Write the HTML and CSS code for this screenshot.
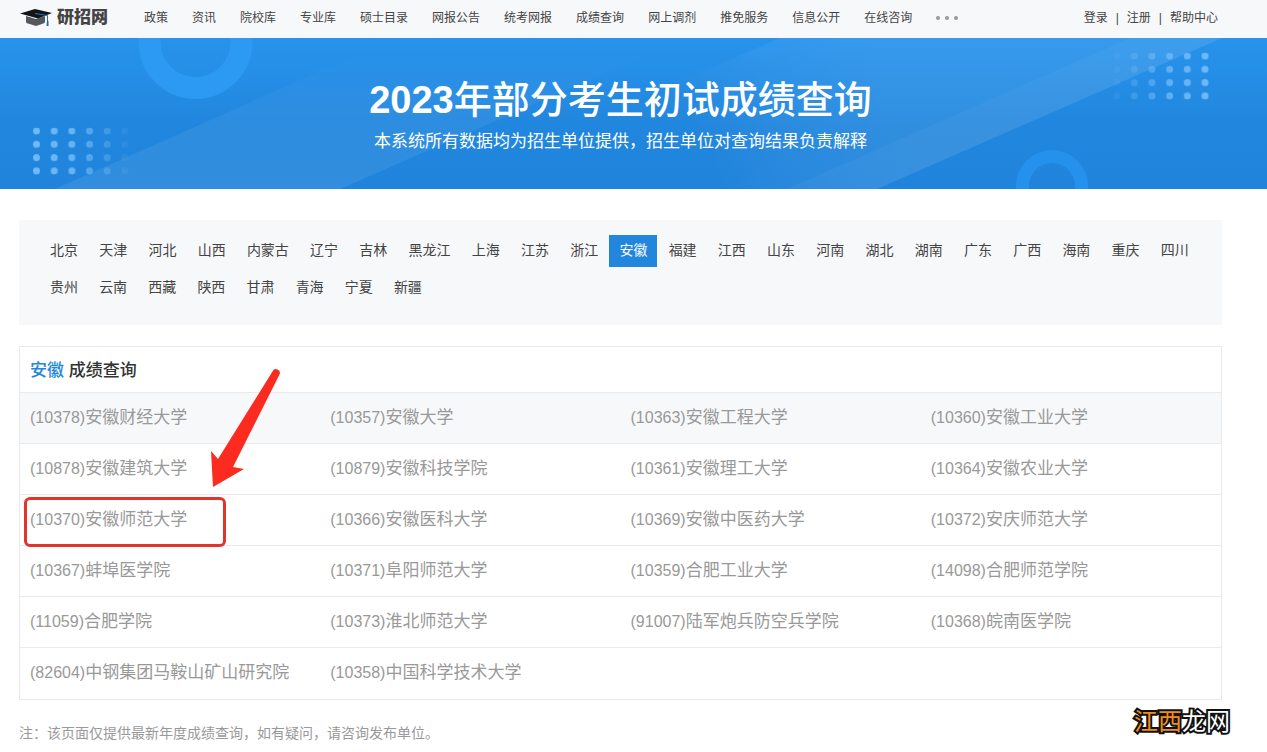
FILE: index.html
```html
<!DOCTYPE html>
<html lang="zh-CN">
<head>
<meta charset="utf-8">
<title>2023年部分考生初试成绩查询</title>
<link rel="stylesheet" href="styles.css">
</head>
<body>
<header class="topbar">
  <a class="logo" href="#">
    <svg class="logo-cap" viewBox="0 0 32 18" aria-hidden="true">
      <path d="M6 7v6q0 1 2 1.600l8 2.400 6-2q3-1 3-2V7l-9 3z" fill="#55585c"/>
      <path d="M0 4.500 15 0l17 4-14 5.500z" fill="#111418"/>
      <path d="M15 4.500 27.500 6.500V16" fill="none" stroke="#2f6fae" stroke-width="1"/>
      <path d="M27 12h1.500v5H26.500z" fill="#26639f"/>
    </svg>
    <span>研招网</span>
  </a>
  <nav class="main-nav">
    <a href="#">政策</a><a href="#">资讯</a><a href="#">院校库</a><a href="#">专业库</a><a href="#">硕士目录</a><a href="#">网报公告</a><a href="#">统考网报</a><a href="#">成绩查询</a><a href="#">网上调剂</a><a href="#">推免服务</a><a href="#">信息公开</a><a href="#">在线咨询</a>
    <button class="more" type="button" aria-label="更多"><i></i><i></i><i></i></button>
  </nav>
  <div class="user-nav">
    <a href="#">登录</a><span>|</span><a href="#">注册</a><span>|</span><a href="#">帮助中心</a>
  </div>
</header>

<section class="banner">
  <svg class="banner-art" viewBox="0 0 1267 151" preserveAspectRatio="xMidYMid slice" aria-hidden="true">
    <defs>
      <linearGradient id="sky" x1="0" y1="0" x2="0" y2="1"><stop offset="0" stop-color="#2893ec"/><stop offset=".6" stop-color="#2186dd"/><stop offset="1" stop-color="#2084dc"/></linearGradient>
      <linearGradient id="beamA" x1="0" y1="1" x2="0" y2="0"><stop offset="0" stop-color="#fff" stop-opacity=".08"/><stop offset=".5" stop-color="#fff" stop-opacity=".05"/><stop offset=".9" stop-color="#fff" stop-opacity="0"/></linearGradient>
      <linearGradient id="beamB" gradientUnits="userSpaceOnUse" x1="690" y1="80" x2="870" y2="10"><stop offset="0" stop-color="#fff" stop-opacity="0"/><stop offset=".4" stop-color="#fff" stop-opacity=".04"/><stop offset="1" stop-color="#fff" stop-opacity=".07"/></linearGradient>
      <pattern id="dots" width="17.700" height="13.300" patternUnits="userSpaceOnUse"><circle cx="3.500" cy="3.500" r="3.500" fill="#78bffa"/></pattern>
      <linearGradient id="fadeR"><stop offset="0" stop-color="#fff" stop-opacity=".9"/><stop offset=".4" stop-color="#fff" stop-opacity=".8"/><stop offset="1" stop-color="#fff" stop-opacity=".08"/></linearGradient>
      <linearGradient id="fadeL"><stop offset="0" stop-color="#fff" stop-opacity=".08"/><stop offset=".6" stop-color="#fff" stop-opacity=".7"/><stop offset="1" stop-color="#fff" stop-opacity=".9"/></linearGradient>
      <mask id="maskR"><rect width="96" height="48" fill="url(#fadeR)"/></mask>
      <mask id="maskL"><rect width="96" height="48" fill="url(#fadeL)"/></mask>
    </defs>
    <rect width="1267" height="151" fill="url(#sky)"/>
    <path d="M55 151 395 0H685L340 151z" fill="url(#beamA)"/>
    <path d="M430 151 780 0H1222L877 151z" fill="url(#beamB)"/>
    <path d="M787 151 1130 0H1222L877 151z" fill="#fff" fill-opacity=".035"/>
    <circle cx="195.500" cy="4" r="46" fill="none" stroke="#2c99f3" stroke-width="22"/>
    <circle cx="1052" cy="148" r="29.500" fill="none" stroke="#2591ec" stroke-width="13"/>
    <g transform="translate(33 89.500)"><rect width="96" height="48" fill="url(#dots)" mask="url(#maskR)"/></g>
    <g transform="translate(1113 14.500)"><rect width="96" height="48" fill="url(#dots)" mask="url(#maskL)"/></g>
  </svg>
  <div class="banner-text">
    <h1><b>2023</b>年部分考生初试成绩查询</h1>
    <p>本系统所有数据均为招生单位提供，招生单位对查询结果负责解释</p>
  </div>
</section>

<main class="content">
  <ul class="regions">
    <li><a href="#">北京</a></li>
    <li><a href="#">天津</a></li>
    <li><a href="#">河北</a></li>
    <li><a href="#">山西</a></li>
    <li><a href="#">内蒙古</a></li>
    <li><a href="#">辽宁</a></li>
    <li><a href="#">吉林</a></li>
    <li><a href="#">黑龙江</a></li>
    <li><a href="#">上海</a></li>
    <li><a href="#">江苏</a></li>
    <li><a href="#">浙江</a></li>
    <li><a class="active" href="#">安徽</a></li>
    <li><a href="#">福建</a></li>
    <li><a href="#">江西</a></li>
    <li><a href="#">山东</a></li>
    <li><a href="#">河南</a></li>
    <li><a href="#">湖北</a></li>
    <li><a href="#">湖南</a></li>
    <li><a href="#">广东</a></li>
    <li><a href="#">广西</a></li>
    <li><a href="#">海南</a></li>
    <li><a href="#">重庆</a></li>
    <li><a href="#">四川</a></li>
    <li><a href="#">贵州</a></li>
    <li><a href="#">云南</a></li>
    <li><a href="#">西藏</a></li>
    <li><a href="#">陕西</a></li>
    <li><a href="#">甘肃</a></li>
    <li><a href="#">青海</a></li>
    <li><a href="#">宁夏</a></li>
    <li><a href="#">新疆</a></li>
  </ul>

  <section class="results">
    <h2><span>安徽</span> 成绩查询</h2>
    <table>
      <tbody>
        <tr class="shaded"><td><a href="#"><span class="code">(10378)</span>安徽财经大学</a></td><td><a href="#"><span class="code">(10357)</span>安徽大学</a></td><td><a href="#"><span class="code">(10363)</span>安徽工程大学</a></td><td><a href="#"><span class="code">(10360)</span>安徽工业大学</a></td></tr>
        <tr><td><a href="#"><span class="code">(10878)</span>安徽建筑大学</a></td><td><a href="#"><span class="code">(10879)</span>安徽科技学院</a></td><td><a href="#"><span class="code">(10361)</span>安徽理工大学</a></td><td><a href="#"><span class="code">(10364)</span>安徽农业大学</a></td></tr>
        <tr>
          <td class="marked"><a href="#"><span class="code">(10370)</span>安徽师范大学</a>
            <svg class="arrow" viewBox="0 0 76 124" aria-hidden="true"><path d="M65.500 6.500A3.500 3.500 0 0 1 72.500 9.500L26 102 37 104 6 122 4 86 11 94z" fill="#fb2b20"/></svg>
          </td><td><a href="#"><span class="code">(10366)</span>安徽医科大学</a></td><td><a href="#"><span class="code">(10369)</span>安徽中医药大学</a></td><td><a href="#"><span class="code">(10372)</span>安庆师范大学</a></td></tr>
        <tr><td><a href="#"><span class="code">(10367)</span>蚌埠医学院</a></td><td><a href="#"><span class="code">(10371)</span>阜阳师范大学</a></td><td><a href="#"><span class="code">(10359)</span>合肥工业大学</a></td><td><a href="#"><span class="code">(14098)</span>合肥师范学院</a></td></tr>
        <tr><td><a href="#"><span class="code">(11059)</span>合肥学院</a></td><td><a href="#"><span class="code">(10373)</span>淮北师范大学</a></td><td><a href="#"><span class="code">(91007)</span>陆军炮兵防空兵学院</a></td><td><a href="#"><span class="code">(10368)</span>皖南医学院</a></td></tr>
        <tr><td><a href="#"><span class="code">(82604)</span>中钢集团马鞍山矿山研究院</a></td><td><a href="#"><span class="code">(10358)</span>中国科学技术大学</a></td><td></td><td></td></tr>
      </tbody>
    </table>
  </section>

  <p class="note">注：该页面仅提供最新年度成绩查询，如有疑问，请咨询发布单位。</p>
</main>

<div class="watermark"><span>江西</span>龙网</div>
</body>
</html>
```
FILE: styles.css
```css
*, *::after {
  box-sizing: border-box;
}

body {
  position: relative;
  margin: 0;
  background: #fff;
  color: #444;
  font-family: "Liberation Sans", "Noto Sans CJK SC", sans-serif;
}

a {
  color: inherit;
  text-decoration: none;
}

h1, h2, p, ul {
  margin: 0;
  padding: 0;
}

.topbar {
  display: flex;
  align-items: center;
  height: 38px;
  padding: 0 49px 3px 20px;
  background: #f7f8fa;
  font-size: 12px;
  line-height: 18px;
  white-space: nowrap;
}

.logo {
  display: flex;
  align-items: center;
  gap: 5px;
  width: 124px;
  color: #444;
  font-size: 17px;
  font-weight: 900;
}

.logo-cap {
  width: 32px;
  height: 18px;
}

.main-nav {
  display: flex;
  align-items: center;
  gap: 24px;
}

.more {
  display: flex;
  gap: 5px;
  padding: 0;
  border: 0;
  background: none;
}

.more i {
  width: 4px;
  height: 4px;
  border-radius: 50%;
  background: #999;
}

.user-nav {
  display: flex;
  gap: 8px;
  margin-left: auto;
}

.banner {
  position: relative;
  padding: 37px 26px 30px 0;
  background: #2186dd;
  color: #fff;
  text-align: center;
}

.banner-art {
  position: absolute;
  inset: 0;
  width: 100%;
  height: 100%;
}

.banner-text {
  position: relative;
}

.banner h1 {
  font-size: 38px;
  font-weight: 500;
  line-height: 50px;
}

.banner p {
  font-size: 17px;
  line-height: 34px;
}

.content {
  padding: 31px 45px 9px 19px;
}

.regions {
  padding: 15px 23px 16px 21px;
  background: #f7f8fa;
  list-style: none;
  font-size: 4px;
  line-height: 0;
  text-align: justify;
}

.regions li {
  display: inline-block;
  margin-bottom: 5px;
  vertical-align: top;
  font-size: 14px;
  line-height: 30px;
}

.regions a {
  display: block;
  padding: 0 10px 2px;
}

.regions .active {
  background: #2186dc;
  color: #fff;
}

.results {
  margin-top: 21px;
  border: 1px solid #e8eaeb;
}

.results h2 {
  padding: 2px 0 0 10px;
  color: #333;
  font-size: 17px;
  font-weight: 500;
  line-height: 43px;
}

.results h2 span {
  color: #2186dc;
}

.results table {
  width: 100%;
  border-collapse: collapse;
  table-layout: fixed;
}

.results tr {
  height: 51px;
  border-top: 1px solid #e8eaeb;
}

.results .shaded {
  background: #f6f8fa;
}

.results td {
  padding: 0 0 0 10px;
  color: #999;
  font-size: 17px;
  line-height: 24px;
  white-space: nowrap;
}

.code {
  font-size: 16px;
}

.results .marked {
  position: relative;
}

.marked::after {
  content: "";
  position: absolute;
  top: 2px;
  left: 4px;
  width: 202px;
  height: 50px;
  border: 3px solid #e3342b;
  border-radius: 6px;
}

.arrow {
  position: absolute;
  bottom: 56px;
  left: 187px;
  width: 76px;
  height: 124px;
}

.note {
  margin-top: 23px;
  color: #999;
  font-size: 14px;
  line-height: 20px;
}

.watermark {
  position: absolute;
  right: 37px;
  bottom: 12px;
  color: #fff;
  font-size: 24px;
  line-height: 36px;
  -webkit-text-stroke: 4px #111;
  paint-order: stroke fill;
}

.watermark span {
  color: #f08c1a;
}
```
